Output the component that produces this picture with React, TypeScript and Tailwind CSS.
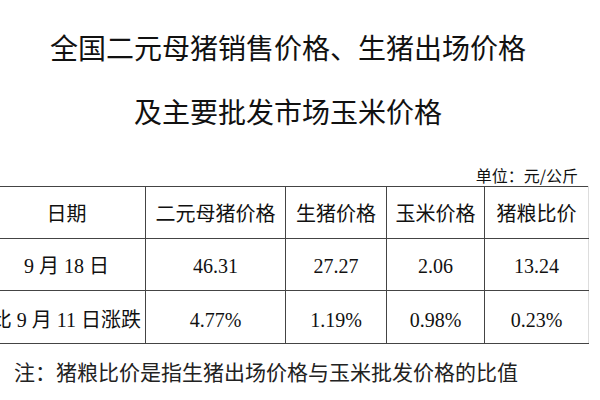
const cjk = "font-['Noto_Sans_CJK_SC','Noto_Sans',sans-serif]";
const mixed = "font-['Liberation_Serif','Noto_Sans_CJK_SC',serif]";

const headers = ["日期", "二元母猪价格", "生猪价格", "玉米价格", "猪粮比价"];
const rows = [
  ["9 月 18 日", "46.31", "27.27", "2.06", "13.24"],
  ["比 9 月 11 日涨跌", "4.77%", "1.19%", "0.98%", "0.23%"],
];
const widths = ["w-[158px]", "w-[140px]", "w-[101px]", "w-[98px]", "w-[104px]"];

export default function App() {
  return (
    <div className="w-[600px] h-[400px] bg-white overflow-hidden text-[#111]">
      {/* title, centred a bit left of page centre */}
      <div className={`${cjk} pr-[24px] pt-[27px] text-center text-[28px] leading-[40px]`}>
        <div>全国二元母猪销售价格、生猪出场价格</div>
        <div className="mt-[24px]">及主要批发市场玉米价格</div>
      </div>

      <div className={`${cjk} mt-[34px] pr-[22px] text-right text-[16px] leading-[20px]`}>单位：元/公斤</div>

      <table className="mt-[1px] ml-[-13px] border-collapse table-fixed w-[601px]">
        <thead>
          <tr className="h-[52px]">
            {headers.map((h, i) => (
              <th
                key={h}
                className={`${cjk} ${widths[i]} p-0 font-normal text-[20px] leading-none text-center border border-[#444] ${i === 4 ? "border-r-[#ddd] border-r-dashed" : ""}`}
              >
                {h}
              </th>
            ))}
          </tr>
        </thead>
        <tbody>
          {rows.map((r, ri) => (
            <tr key={ri} className={ri === 0 ? "h-[52px]" : "h-[53px]"}>
              {r.map((c, i) => (
                <td
                  key={i}
                  className={`${mixed} p-0 text-[20px] leading-none text-center whitespace-nowrap border border-[#444] ${i === 4 ? "border-r-[#ddd]" : ""} ${ri === 1 ? "pt-[6px]" : "pt-[2px]"}`}
                >
                  {c}
                </td>
              ))}
            </tr>
          ))}
        </tbody>
      </table>

      <div className={`${cjk} mt-[12px] ml-[14px] text-[21px] leading-[30px] text-[#222]`}>
        注：猪粮比价是指生猪出场价格与玉米批发价格的比值
      </div>
    </div>
  );
}
